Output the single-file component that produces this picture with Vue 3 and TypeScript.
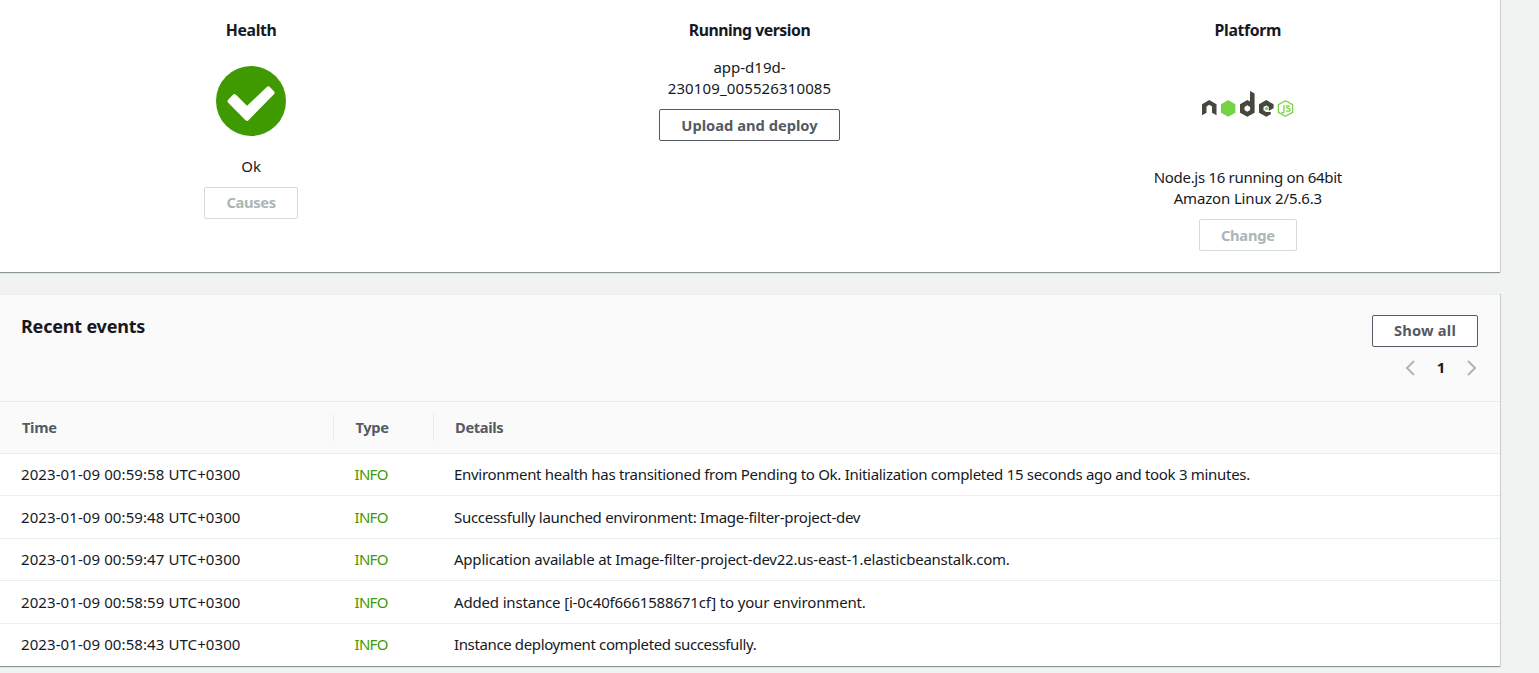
<script setup lang="ts">
interface EventRow {
  time: string
  type: string
  details: string
  fit: string
}

const events: EventRow[] = [
  { time: '2023-01-09 00:59:58 UTC+0300', type: 'INFO', details: 'Environment health has transitioned from Pending to Ok. Initialization completed 15 seconds ago and took 3 minutes.', fit: 'd1' },
  { time: '2023-01-09 00:59:48 UTC+0300', type: 'INFO', details: 'Successfully launched environment: Image-filter-project-dev', fit: 'd2' },
  { time: '2023-01-09 00:59:47 UTC+0300', type: 'INFO', details: 'Application available at Image-filter-project-dev22.us-east-1.elasticbeanstalk.com.', fit: 'd3' },
  { time: '2023-01-09 00:58:59 UTC+0300', type: 'INFO', details: 'Added instance [i-0c40f6661588671cf] to your environment.', fit: 'd4' },
  { time: '2023-01-09 00:58:43 UTC+0300', type: 'INFO', details: 'Instance deployment completed successfully.', fit: 'd5' },
]
</script>

<template>
  <main class="page">
    <section class="panel overview">
      <div class="col">
        <h3>Health</h3>
        <svg class="status" viewBox="0 0 70 70">
          <circle cx="35" cy="35" r="35" fill="#3f9a02" />
          <path d="M18.5 30.3 L31 42.8 L52.3 22.4 L56.4 26.7 L31 52.8 L13.7 35.3Z" fill="#fff" stroke="#fff" stroke-width="4.2" stroke-linejoin="round" />
        </svg>
        <p class="ok">Ok</p>
        <button class="btn disabled causes">Causes</button>
      </div>
      <div class="col">
        <h3 class="running">Running version</h3>
        <p class="version"><span>app-d19d-</span><br /><span class="v2">230109_005526310085</span></p>
        <button class="btn upload">Upload and deploy</button>
      </div>
      <div class="col">
        <h3>Platform</h3>
        <svg class="node" viewBox="0 0 92 28">
          <g fill="#46483e">
            <path d="M0 14.3 L7.2 10.1 L14.5 14.3 V25.3 L10 22.7 V16.4 L7.2 14.8 L4.5 16.4 V22.7 L0 25.3Z" />
            <path fill-rule="evenodd" d="M48 1 L52.6 3.6 V22.7 L45.3 26.8 L38 22.7 V14.3 L45.3 10.1 L48 11.6Z M45.3 15.3 L42.5 16.9 V20.1 L45.3 21.7 L48.1 20.1 V16.9Z" />
            <path d="M57 14.3 L64.3 10.1 L71.6 14.3 V18.2 L66.8 20.9 V17 L64.3 15.5 L61.5 17.1 V20.3 L64.2 22 L68.8 22.1 V24.3 L64.3 26.8 L57 22.7Z" />
          </g>
          <path fill="#76d344" d="M26.2 10.1 L33.4 14.3 V22.7 L26.2 26.8 L19 22.7 V14.3Z" />
          <circle cx="64.5" cy="18.5" r="1.6" fill="#76d344" />
          <g fill="none" stroke="#76d344">
            <path stroke-width="1.3" d="M83.5 10.7 L90.6 14.7 V22.4 L83.5 26.3 L76.4 22.4 V14.7Z" />
            <path stroke-width="1.3" d="M82 15 V21.5 Q82 23 80.6 22.7 L79.5 22.1 M88 16.3 Q84.5 15.3 84.5 17 Q84.7 18.3 86.5 18.4 Q88.4 18.7 88.2 20 Q87.8 21.6 84.2 20.8" />
          </g>
        </svg>
        <p class="platform"><span class="p1">Node.js 16 running on 64bit</span><br /><span class="p2">Amazon Linux 2/5.6.3</span></p>
        <button class="btn disabled change">Change</button>
      </div>
    </section>

    <section class="panel events">
      <header class="head">
        <h2>Recent events</h2>
        <div class="tools">
          <button class="btn showall">Show all</button>
          <nav class="pager">
            <svg viewBox="0 0 10 16"><path d="M9 1 L2 8 L9 15" /></svg>
            <b>1</b>
            <svg viewBox="0 0 10 16"><path d="M1 1 L8 8 L1 15" /></svg>
          </nav>
        </div>
      </header>
      <div class="row titles">
        <div class="th">Time</div>
        <div class="th">Type</div>
        <div class="th">Details</div>
      </div>
      <div v-for="e in events" :key="e.time" class="row item">
        <div class="td"><span class="time">{{ e.time }}</span></div>
        <div class="td info"><span>{{ e.type }}</span></div>
        <div class="td"><span :class="e.fit">{{ e.details }}</span></div>
      </div>
    </section>
  </main>
</template>

<style>
body {
  background: #f1f3f3;
  overflow: hidden;
}
</style>

<style scoped>
.page {
  height: 673px;
  overflow: hidden;
  font: 15px/21px "Noto Sans", "Open Sans", sans-serif;
  color: #16191f;
}
.page * {
  box-sizing: border-box;
}
h2, h3, p {
  margin: 0;
}
.panel {
  width: 1500px;
  background: #fff;
  box-shadow: 1px 0 0 #c8cfcf, 0 1px 0 #879596, 0 1px 1px #9da8a9;
}
.overview {
  height: 272px;
  padding: 0 3px 0 2px;
  display: grid;
  grid-template-columns: repeat(3, 1fr);
}
.col {
  display: flex;
  flex-direction: column;
  align-items: center;
  text-align: center;
  white-space: nowrap;
}
h3 {
  margin-top: 20px;
  font-size: 15.8px;
  line-height: 21px;
  font-weight: 700;
  letter-spacing: -0.35px;
}
.running {
  letter-spacing: -0.48px;
}
.status {
  width: 70px;
  height: 70px;
  margin-top: 25px;
}
.ok {
  margin-top: 20px;
}
.btn {
  height: 32px;
  padding: 0;
  border: 1px solid #545b64;
  border-radius: 2px;
  background: #fff;
  color: #545b64;
  font: 700 14.7px/20px "Noto Sans", "Open Sans", sans-serif;
  letter-spacing: 0;
}
.disabled {
  border-color: #d5dbdb;
  color: #aab7b8;
}
.causes {
  width: 94px;
  margin-top: 10px;
  padding-bottom: 2px;
  letter-spacing: -0.3px;
}
.version {
  margin-top: 16px;
}
.v2 {
  letter-spacing: 0.13px;
}
.upload {
  width: 181px;
  margin-top: 10px;
  letter-spacing: 0;
}
.node {
  width: 92px;
  height: 28px;
  margin-top: 49px;
}
.platform {
  margin-top: 49px;
}
.p1 {
  letter-spacing: -0.3px;
}
.p2 {
  letter-spacing: -0.15px;
}
.change {
  width: 98px;
  margin-top: 10px;
  letter-spacing: -0.25px;
}
.events {
  height: 372px;
  margin-top: 22px;
  border-top: 1px solid #eaeded;
}
.head {
  height: 107px;
  padding: 20px 22px 0 21px;
  display: flex;
  justify-content: space-between;
  background: #fafafa;
  border-bottom: 1px solid #eaeded;
}
h2 {
  font-size: 18px;
  line-height: 22px;
  font-weight: 700;
  letter-spacing: -0.2px;
}
.tools {
  display: flex;
  flex-direction: column;
  align-items: flex-end;
}
.showall {
  width: 106px;
  padding-bottom: 2px;
  letter-spacing: 0.2px;
}
.pager {
  display: flex;
  align-items: center;
  gap: 22px;
  margin: 10px 0.6px 0 0;
}
.pager svg {
  width: 10px;
  height: 16px;
  fill: none;
  stroke: #aab7b8;
  stroke-width: 2;
}
.row {
  display: grid;
  grid-template-columns: 334px 100px 1fr;
  align-items: center;
}
.titles {
  height: 52px;
  background: #fafafa;
  border-bottom: 1px solid #eaeded;
}
.th {
  height: 27px;
  padding-left: 21.5px;
  border-right: 1px solid #eaeded;
  color: #545b64;
  font-size: 14.7px;
  font-weight: 700;
  line-height: 27px;
  letter-spacing: -0.35px;
}
.th:first-child {
  padding-left: 22px;
}
.th:last-child {
  padding-left: 21px;
  border-right: 0;
}
.item {
  height: 42.45px;
  border-bottom: 1px solid #eaeded;
}
.item:last-child {
  height: 42px;
  border-bottom: 0;
}
.td {
  padding-left: 20px;
  white-space: nowrap;
}
.td:first-child {
  padding-left: 21px;
}
.time {
  letter-spacing: 0.09px;
}
.td.info {
  padding-left: 20.5px;
  color: #3f9a02;
  letter-spacing: -0.7px;
}
.d1 {
  letter-spacing: -0.3px;
}
.d2 {
  letter-spacing: -0.28px;
}
.d3 {
  letter-spacing: -0.22px;
}
.d4 {
  letter-spacing: -0.165px;
}
.d5 {
  letter-spacing: -0.37px;
}
</style>
